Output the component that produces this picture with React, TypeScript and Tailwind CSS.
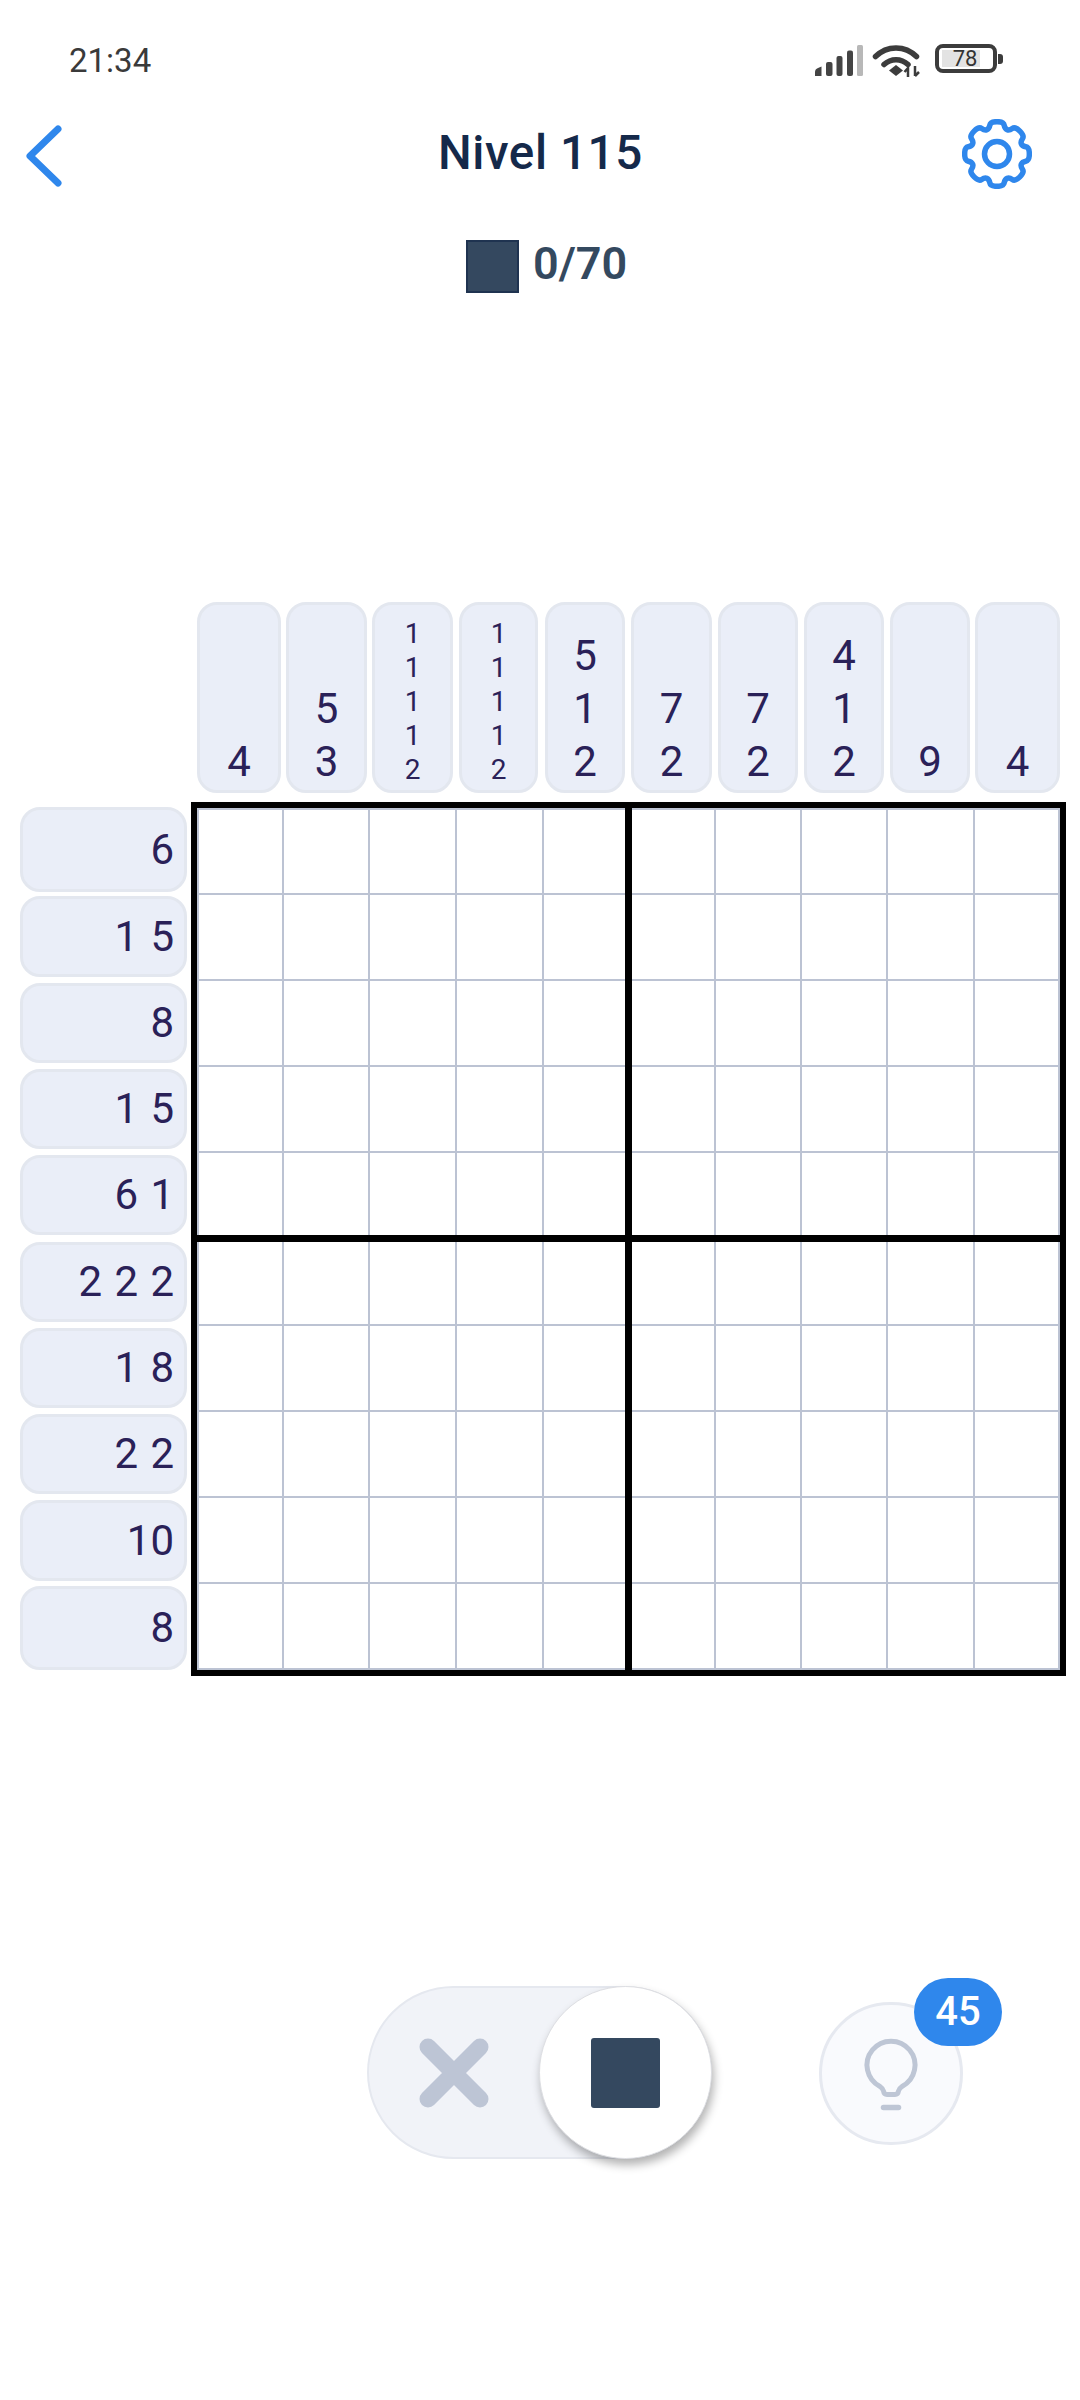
import React from "react";

const topClues: { nums: string[]; w: string }[] = [
  { nums: ["4"], w: "w-[84px]" },
  { nums: ["5", "3"], w: "w-[81px]" },
  { nums: ["1", "1", "1", "1", "2"], w: "w-[81px]" },
  { nums: ["1", "1", "1", "1", "2"], w: "w-[79px]" },
  { nums: ["5", "1", "2"], w: "w-[80px]" },
  { nums: ["7", "2"], w: "w-[81px]" },
  { nums: ["7", "2"], w: "w-[80px]" },
  { nums: ["4", "1", "2"], w: "w-[80px]" },
  { nums: ["9"], w: "w-[80px]" },
  { nums: ["4"], w: "w-[85px]" },
];

const leftClues: { nums: string[]; h: string }[] = [
  { nums: ["6"], h: "h-[85px]" },
  { nums: ["1", "5"], h: "h-[81px]" },
  { nums: ["8"], h: "h-[80px]" },
  { nums: ["1", "5"], h: "h-[80px]" },
  { nums: ["6", "1"], h: "h-[80px]" },
  { nums: ["2", "2", "2"], h: "h-[80px]" },
  { nums: ["1", "8"], h: "h-[80px]" },
  { nums: ["2", "2"], h: "h-[80px]" },
  { nums: ["10"], h: "h-[81px]" },
  { nums: ["8"], h: "h-[84px]" },
];

function gearPath(cx: number, cy: number) {
  const pts: [number, number][] = [];
  const rOut = 33;
  const rIn = 26.5;
  for (let i = 0; i < 8; i++) {
    const a = (i * Math.PI) / 4 - Math.PI / 2;
    const add = (r: number, d: number) =>
      pts.push([cx + r * Math.cos(a + d), cy + r * Math.sin(a + d)]);
    add(rIn, -0.3);
    add(rOut, -0.2);
    add(rOut, 0.2);
    add(rIn, 0.3);
  }
  const mid = (p: [number, number], q: [number, number]) => [(p[0] + q[0]) / 2, (p[1] + q[1]) / 2];
  const start = mid(pts[pts.length - 1], pts[0]);
  let d = `M${start[0].toFixed(2)} ${start[1].toFixed(2)}`;
  pts.forEach((p, i) => {
    const m = mid(p, pts[(i + 1) % pts.length]);
    d += `Q${p[0].toFixed(2)} ${p[1].toFixed(2)} ${m[0].toFixed(2)} ${m[1].toFixed(2)}`;
  });
  return d + "Z";
}

function SignalIcon() {
  return (
    <svg width="50" height="32" viewBox="0 0 50 32" className="mt-[1px] block">
      <path d="M0 31 V27 Q0 24 3 23 L6.5 21.5 V31 Z" fill="#444444" />
      <rect x="11" y="17" width="6.5" height="14" rx="2" fill="#444444" />
      <rect x="21.5" y="11" width="6" height="20" rx="2" fill="#444444" />
      <rect x="32" y="5.5" width="6" height="25.5" rx="2" fill="#444444" />
      <rect x="42" y="0" width="6" height="31" rx="1.5" fill="#b8b8b8" />
    </svg>
  );
}

function WifiIcon() {
  return (
    <svg width="50" height="34" viewBox="0 0 50 34" className="block">
      <path d="M3.5 12.5 C15 1 33 1 44.5 12.5" fill="none" stroke="#3c3c3c" strokeWidth="5.5" strokeLinecap="round" />
      <path d="M12 20.5 C19 14 29 14 36 20.5" fill="none" stroke="#3c3c3c" strokeWidth="5.5" strokeLinecap="round" />
      <path d="M24 21 L31 26.5 L24 32 L17 26.5 Z" fill="#3c3c3c" />
      <path d="M36 33 V25 M32.5 28 L36 24 V33" fill="none" stroke="#3c3c3c" strokeWidth="2.5" />
      <path d="M43 22 V32 M43 32 L47 28" fill="none" stroke="#3c3c3c" strokeWidth="2.5" />
    </svg>
  );
}

function Battery() {
  return (
    <div className="flex items-center">
      <div className="flex h-[29px] w-[62px] items-center rounded-[8px] border-[4px] border-[#3c3c3c] px-[3px]">
        <div className="flex h-[17px] w-[38px] items-center justify-center bg-[#e3e3e3] pl-[8px] text-[22px] leading-none text-[#333333] [font-family:Roboto,sans-serif]">
          78
        </div>
      </div>
      <div className="ml-[1px] h-[10px] w-[5px] rounded-r-[3px] bg-[#3c3c3c]" />
    </div>
  );
}

export default function App() {
  return (
    <div className="flex h-[2400px] w-[1080px] flex-col overflow-hidden bg-white [font-family:Roboto,sans-serif]">
      <div className="flex h-[119px] items-start justify-between pl-[69px] pr-[77px] pt-[44px]">
        <span className="text-[33px] leading-[34px] text-[#3a3a3a]">21:34</span>
        <div className="flex items-start gap-[10px]">
          <SignalIcon />
          <div className="-ml-[3px]">
            <WifiIcon />
          </div>
          <div className="ml-[3px]">
            <Battery />
          </div>
        </div>
      </div>

      <div className="flex h-[70px] items-center pl-[26px] pr-[48px]">
        <svg width="36" height="62" viewBox="0 0 36 62" className="block translate-y-[2px]">
          <path d="M32 4 L4 31 L32 58" fill="none" stroke="#2f87ec" strokeWidth="7" strokeLinecap="round" strokeLinejoin="round" />
        </svg>
        <h1 className="ml-[376px] text-[47.5px] font-medium leading-none tracking-[0.6px] text-[#15294a]">Nivel 115</h1>
        <svg width="70" height="70" viewBox="0 0 70 70" className="ml-auto block">
          <path d={gearPath(35, 35)} fill="none" stroke="#2f87ec" strokeWidth="5.5" strokeLinejoin="round" />
          <circle cx="35" cy="35" r="12.5" fill="none" stroke="#2f87ec" strokeWidth="5.5" />
        </svg>
      </div>

      <div className="ml-[466px] mt-[51px] flex h-[53px] items-center gap-[14px]">
        <div className="h-[53px] w-[53px] border-2 border-[#1f3350] bg-[#34485f]" />
        <span className="-translate-y-[3px] text-[45px] font-semibold leading-none text-[#34495f]">0/70</span>
      </div>

      <div className="ml-[197px] mt-[309px] grid h-[191px] w-[863px] grid-cols-[89px_86px_87px_86px_86px_87px_86px_86px_85px_85px]">
        {topClues.map((col, i) => (
          <div
            key={i}
            className={
              col.w +
              " flex flex-col items-center justify-end rounded-[20px] border-[3px] border-[#e3e7ef] bg-[#eaeef8] text-[#2a2158] " +
              (col.nums.length > 3 ? "pb-[3px] text-[28px] leading-[34px]" : "pb-[2px] text-[42px] leading-[53px]")
            }
          >
            {col.nums.map((n, j) => (
              <span key={j}>{n}</span>
            ))}
          </div>
        ))}
      </div>

      <div className="mt-[9px] flex items-start">
        <div className="ml-[20px] mt-[5px] grid h-[863px] w-[167px] grid-rows-[89px_87px_86px_86px_87px_86px_86px_86px_86px_84px]">
          {leftClues.map((row, i) => (
            <div
              key={i}
              className={
                row.h +
                " flex items-center justify-end gap-[12.4px] rounded-[20px] border-[3px] border-[#e3e7ef] bg-[#eaeef8] pr-[10px] text-[42px] leading-none text-[#2a2158]"
              }
            >
              {row.nums.map((n, j) => (
                <span key={j}>{n}</span>
              ))}
            </div>
          ))}
        </div>
        <div className="relative ml-[4px] h-[874px] w-[875px] border-[6px] border-black">
          <div className="grid h-[862px] w-[863px] grid-cols-[87px_86px_87px_87px_88px_84px_86px_86px_87px_85px] grid-rows-[87px_86px_86px_86px_89px_84px_86px_86px_86px_86px] outline-2 -outline-offset-2 outline-[#bcc3d3]">
            {Array.from({ length: 100 }).map((_, k) => (
              <div key={k} className="border-b-2 border-r-2 border-b-[#bcc3d3] border-r-[#bcc3d3]" />
            ))}
          </div>
          <div className="absolute bottom-0 left-[428px] top-0 w-[7px] bg-black" />
          <div className="absolute left-0 right-0 top-[427px] h-[7px] bg-black" />
        </div>
      </div>

      <div className="ml-[367px] mt-[310px] flex items-start">
        <div className="flex h-[173px] w-[345px] items-center justify-between rounded-full border-2 border-[#e5e8ef] bg-[#f1f3f8]">
          <svg width="70" height="70" viewBox="0 0 70 70" className="ml-[50px] block">
            <path d="M9 9 L61 61 M61 9 L9 61" fill="none" stroke="#bdc5d5" strokeWidth="17" strokeLinecap="round" />
          </svg>
          <div className="-mr-[2px] flex h-[173px] w-[173px] items-center justify-center rounded-full border border-[#dedfe3] bg-white shadow-[2px_6px_10px_rgba(0,0,0,0.3)]">
            <div className="h-[70px] w-[69px] rounded-[3px] bg-[#34485f]" />
          </div>
        </div>
        <div className="relative ml-[107px] mt-[16px] flex h-[143px] w-[144px] items-center justify-center rounded-full border-[3px] border-[#e6e9f0] bg-[#f9fafd]">
          <svg width="60" height="75" viewBox="0 0 60 75" className="block translate-y-[2px]">
            <path
              d="M19 48.5 A24 24 0 1 1 41 48.5 Q38 50.5 37.5 53 Q37 56.5 34 56.5 H26 Q23 56.5 22.5 53 Q22 50.5 19 48.5 Z"
              fill="none"
              stroke="#bec6d5"
              strokeWidth="5"
              strokeLinejoin="round"
            />
            <path d="M22.5 69.5 H37.5" fill="none" stroke="#bec6d5" strokeWidth="5.5" strokeLinecap="round" />
          </svg>
          <div className="absolute -top-[27px] left-[92px] flex h-[68px] w-[88px] items-center justify-center rounded-full bg-[#2f87ec] text-[40px] font-medium leading-none text-white">
            45
          </div>
        </div>
      </div>
    </div>
  );
}
